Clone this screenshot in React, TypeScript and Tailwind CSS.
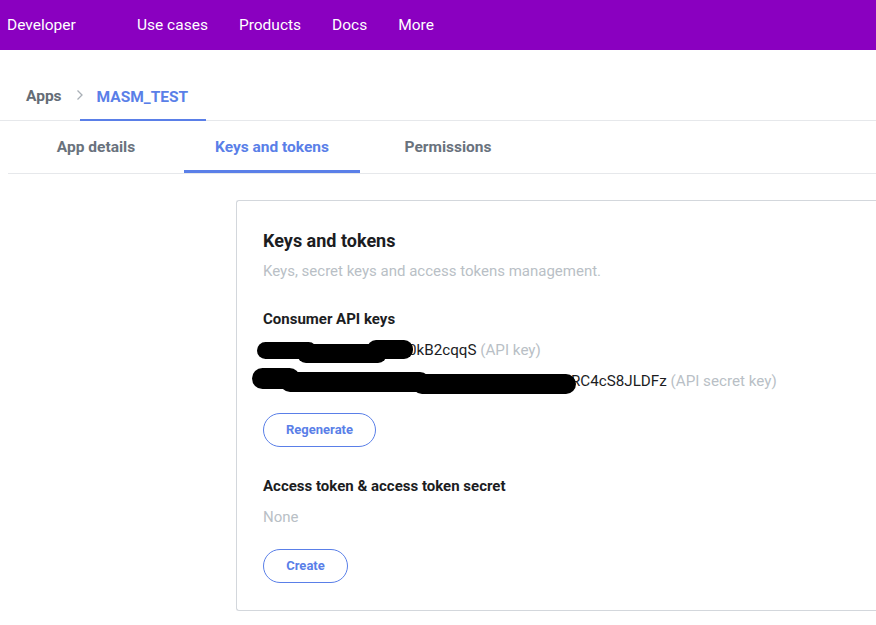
export default function App() {
  const tabs = ["App details", "Keys and tokens", "Permissions"];
  const active = 1;

  return (
    <div className="min-h-screen bg-white font-['Roboto',sans-serif] text-[#1c1d1f]">
      {/* Top bar */}
      <header className="h-[50px] bg-[#8a00c0] text-white flex items-center text-[15.5px] pt-[2px]">
        <span className="pl-[7px] w-[137px]">Developer</span>
        <nav className="flex gap-[31px]">
          <span>Use cases</span>
          <span>Products</span>
          <span>Docs</span>
          <span>More</span>
        </nav>
      </header>

      {/* Breadcrumb */}
      <div className="h-[71px] flex items-end border-b border-[#e6e8eb]">
        <span className="pl-[26px] pb-[14px] text-[15.5px] font-bold text-[#646c76] leading-[20px]">Apps</span>
        <svg className="ml-[14px] mb-[19px]" width="8" height="12" viewBox="0 0 8 12">
          <path d="M1.5 1.5 L6 6 L1.5 10.5" fill="none" stroke="#a9afb6" strokeWidth="1.3" />
        </svg>
        <span className="ml-[-4px] pl-[17px] pr-[18px] pb-[12px] border-b-[2px] border-[#5a7fe8] text-[15.5px] font-bold text-[#5a7fe8] leading-[20px] -mb-[1px]">
          MASM_TEST
        </span>
      </div>

      {/* Tabs */}
      <div className="ml-[8px] flex border-b border-[#e6e8eb]">
        {tabs.map((t, i) => (
          <div
            key={t}
            className={
              i === active
                ? "w-[176px] h-[52px] flex items-center justify-center border-b-[3px] border-[#5a7fe8] text-[15.5px] font-bold text-[#5a7fe8] pt-[5px] -mb-[1px]"
                : "w-[176px] h-[52px] flex items-center justify-center text-[15.5px] font-bold text-[#69727d] pt-[2px]"
            }
          >
            {t}
          </div>
        ))}
      </div>

      {/* Card */}
      <div className="pl-[236px] pt-[26px]">
        <div className="border border-[#d3d7dc] border-r-0 rounded-l-[3px] pl-[26px] pt-[28px] pb-[27px]">
          <h2 className="text-[18px] leading-[24px] font-bold">Keys and tokens</h2>
          <p className="mt-[8px] text-[15px] leading-[20px] text-[#b9bfc6]">
            Keys, secret keys and access tokens management.
          </p>

          <h3 className="mt-[28px] text-[15px] leading-[20px] font-bold">Consumer API keys</h3>
          <div className="relative mt-[11px] text-[15.2px] leading-[20px]">
            <span className="inline-block w-[145px]" />
            <span>0kB2cqqS</span> <span className="text-[#b9bfc6]">(API key)</span>
            <svg className="absolute left-[-6px] top-0" width="160" height="24" viewBox="0 0 160 24">
              <rect x="0" y="2" width="60" height="17" rx="8.5" fill="#000" />
              <rect x="40" y="4" width="90" height="19" rx="9" fill="#000" />
              <rect x="110" y="0" width="46" height="19" rx="9" fill="#000" />
            </svg>
          </div>
          <div className="relative mt-[11px] text-[15.2px] leading-[20px]">
            <span className="inline-block w-[308px]" />
            <span>RC4cS8JLDFz</span> <span className="text-[#b9bfc6]">(API secret key)</span>
            <svg className="absolute left-[-11px] top-[-3px]" width="330" height="26" viewBox="0 0 330 26">
              <rect x="0" y="0" width="48" height="21" rx="10.5" fill="#000" />
              <rect x="28" y="4" width="150" height="20" rx="10" fill="#000" />
              <rect x="160" y="6" width="164" height="20" rx="10" fill="#000" />
            </svg>
          </div>

          <button className="mt-[22px] h-[34px] w-[113px] rounded-full border border-[#5a7fe8] text-[13px] font-bold text-[#5a7fe8]">
            Regenerate
          </button>

          <h3 className="mt-[29px] text-[15px] leading-[20px] font-bold">Access token &amp; access token secret</h3>
          <p className="mt-[11px] text-[15px] leading-[20px] text-[#b9bfc6]">None</p>

          <button className="mt-[22px] h-[34px] w-[85px] rounded-full border border-[#5a7fe8] text-[13px] font-bold text-[#5a7fe8]">
            Create
          </button>
        </div>
      </div>
    </div>
  );
}
